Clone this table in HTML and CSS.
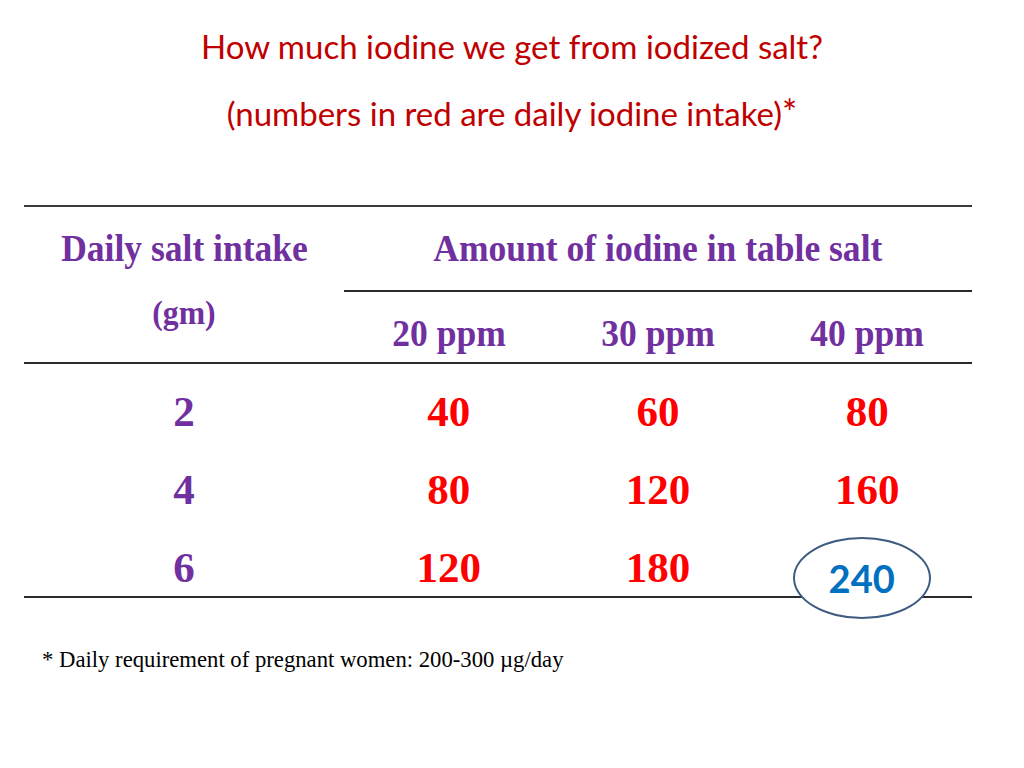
FILE: index.html
```html
<!DOCTYPE html>
<html>
<head>
<meta charset="utf-8">
<link rel="stylesheet" href="styles.css">
</head>
<body>
<div class="slide">
  <div class="title">
    <p class="title-line first">How much iodine we get from iodized salt?</p>
    <p class="title-line second">(numbers in red are daily iodine intake)<span class="star">*</span></p>
  </div>

  <div class="table">
    <div class="head">
      <div class="head-left">
        <span class="sq">Daily salt intake</span>
        <span class="sq">(gm)</span>
      </div>
      <div class="head-right">
        <div class="amount"><span class="sq">Amount of iodine in table salt</span></div>
        <div class="ppm-row">
          <div class="ppm"><span class="sq">20 ppm</span></div>
          <div class="ppm"><span class="sq">30 ppm</span></div>
          <div class="ppm"><span class="sq">40 ppm</span></div>
        </div>
      </div>
    </div>
    <div class="body">
      <div class="cell salt">2</div>
      <div class="cell val">40</div>
      <div class="cell val">60</div>
      <div class="cell val">80</div>

      <div class="cell salt">4</div>
      <div class="cell val">80</div>
      <div class="cell val">120</div>
      <div class="cell val">160</div>

      <div class="cell salt">6</div>
      <div class="cell val">120</div>
      <div class="cell val">180</div>
      <div class="cell val circled">
        <div class="ellipse"><span class="circle-num">240</span></div>
      </div>
    </div>
  </div>

  <p class="footnote">* Daily requirement of pregnant women: 200-300 µg/day</p>
</div>
</body>
</html>
```

FILE: styles.css
```css
html, body {
  margin: 0;
  padding: 0;
  background: #ffffff;
}

.slide {
  width: 1024px;
  height: 768px;
  overflow: hidden;
}

.title {
  text-align: center;
  color: #c00000;
  font-family: Lato, "Open Sans", sans-serif;
  font-size: 33px;
  padding-top: 25px;
}

.title-line {
  margin: 0;
  height: 42px;
  line-height: 42px;
}

.title-line.second {
  margin-top: 25px;
}

.star {
  font-size: 36px;
  line-height: 0;
}

.table {
  margin: 71px 0 0 24px;
  width: 948px;
  border-top: 2px solid #3a3a3a;
  font-family: "Liberation Serif", "Times New Roman", serif;
  font-weight: bold;
}

.sq {
  display: inline-block;
  transform: scaleX(0.96);
}

.head {
  display: grid;
  grid-template-columns: 320px 1fr;
  border-bottom: 2px solid #2a2a2a;
  color: #7030a0;
}

.head-left {
  display: flex;
  flex-direction: column;
  align-items: center;
  font-size: 37px;
  line-height: 65px;
  padding-top: 9px;
}

.head-left .sq:last-child {
  font-size: 33px;
}

.head-right {
  display: flex;
  flex-direction: column;
}

.amount {
  height: 85px;
  border-bottom: 2px solid #2a2a2a;
  display: flex;
  align-items: center;
  justify-content: center;
  font-size: 37px;
  box-sizing: border-box;
}

.ppm-row {
  display: grid;
  grid-template-columns: repeat(3, 1fr);
  height: 70px;
}

.ppm {
  display: flex;
  justify-content: center;
  align-items: center;
  font-size: 37px;
  padding-top: 12px;
}

.body {
  display: grid;
  grid-template-columns: 320px repeat(3, 1fr);
  grid-template-rows: 78px 78px 67px;
  padding-top: 9px;
  border-bottom: 2px solid #2a2a2a;
}

.cell {
  text-align: center;
  line-height: 78px;
  font-size: 43px;
}

.salt {
  color: #7030a0;
}

.val {
  color: #ff0000;
}

.circled {
  position: relative;
}

.ellipse {
  position: absolute;
  left: 30px;
  top: 8px;
  width: 134px;
  height: 78px;
  border: 2px solid #3e5c82;
  border-radius: 50%;
  background: #ffffff;
  display: flex;
  align-items: center;
  justify-content: center;
  z-index: 2;
}

.circle-num {
  font-family: Lato, "Open Sans", sans-serif;
  font-weight: bold;
  color: #0070c0;
  font-size: 38px;
  line-height: 1;
}

.footnote {
  margin: 49px 0 0 42px;
  font-family: "Liberation Serif", "Times New Roman", serif;
  font-size: 22.7px;
  line-height: 26px;
  color: #000000;
}
```
